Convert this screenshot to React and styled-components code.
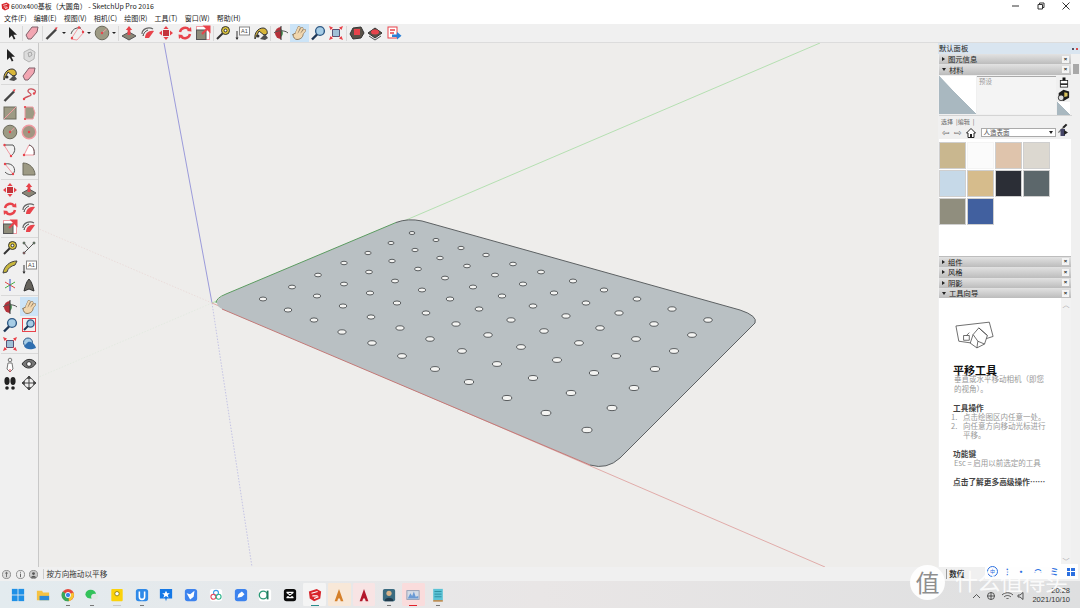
import React from "react";
import styled, { createGlobalStyle } from "styled-components";

const Global = createGlobalStyle`
  html, body { margin: 0; padding: 0; background: #f0f0f0; overflow: hidden; }
  * { box-sizing: border-box; }
  body { font-family: "Noto Sans CJK SC", "Liberation Sans", sans-serif; }
`;

const R = "#e8434b";
const P = "#f19aa2";

const icons = {
  arrow: <path d="M5 2v11l2.8-2.6 2 4.2 1.6-.8-2-4H13z" fill="#222" />,
  eraser: <path d="M2 10l6-8h6l-1 5-6 7H4z" fill="#f2a6b2" stroke="#80606a" />,
  pencil: <g><path d="M2.5 14L12 4.5" stroke="#444" strokeWidth="2.4" /><path d="M10.5 3l3-1-1 3z" fill={R} /></g>,
  line: <g fill="none"><path d="M3 12c1-3 6-2 7-4S6 6 7 3.500s5-2 7 0c1 1 0 3-1 3" stroke="#c9505a" strokeWidth="1.300" /><circle cx="3" cy="12" r="1.200" fill={R} /><circle cx="13" cy="6.500" r="1.200" fill={R} /></g>,
  arc: <g fill="none"><path d="M2 14L10 2l5 5-7 8z" stroke={P} /><path d="M2 9a8 8 0 0 1 10-6" stroke="#555" /><circle cx="3" cy="13" r="1.2" fill={R} /><circle cx="10" cy="2.5" r="1.2" fill={R} /><circle cx="14" cy="7" r="1.2" fill={R} /></g>,
  disc: <g><circle cx="8" cy="8" r="6.8" fill="#9d9a84" stroke="#6c6a5c" /><path d="M8 8l4.5-4" stroke={P} /><circle cx="8" cy="8" r="1.2" fill={R} /></g>,
  polygon: <g><circle cx="8" cy="8" r="6.8" fill="#a29582" stroke={P} strokeWidth="1.4" /><circle cx="8" cy="8" r="1.2" fill={R} /></g>,
  square: <g><rect x="2" y="2" width="12" height="12" fill="#9d9a84" stroke="#6c6a5c" /><path d="M2 14L14 2" stroke={P} /></g>,
  rotRect: <g><path d="M4 2h8l2 6-2 6H4z" fill="#9d9a84" stroke={P} /><circle cx="4" cy="2" r="1.1" fill={R} /><circle cx="4" cy="14" r="1.1" fill={R} /></g>,
  arc2: <g fill="none"><path d="M2 3h9c3 3 2 8-2 11" stroke="#555" /><path d="M2 3l7 11" stroke={P} /><circle cx="2.5" cy="3" r="1.2" fill={R} /><circle cx="9" cy="14" r="1.2" fill={R} /></g>,
  pie: <g><path d="M3 13L8 3c4 1 6 5 5 10z" fill="#fff" stroke={P} /><path d="M8 3c4 1 6 5 5 10" fill="none" stroke="#555" /><circle cx="3" cy="13" r="1.2" fill={R} /></g>,
  curve: <g fill="none"><path d="M3 3c8-2 12 6 8 10-2 1-5 1-8-2" stroke="#555" /><path d="M3 3l8 10" stroke={P} /><circle cx="3" cy="3" r="1.2" fill={R} /><circle cx="11" cy="13" r="1.2" fill={R} /></g>,
  wedge: <path d="M2 2v12h12C14 8 9 2 2 2z" fill="#9d9a84" stroke="#6c6a5c" />,
  pushpull: <g><path d="M1 11l7-4 7 4-7 4z" fill="#8a8676" stroke="#555" /><path d="M8 1l3.2 4H9.4v5H6.6V5H4.8z" fill={R} /></g>,
  followme: <g fill="none"><path d="M2 9a7 6 0 0 1 11-5" stroke="#666" strokeWidth="1.2" /><path d="M5 13c0-5 4-8 9-7l-5 7z" fill={R} /><path d="M3 11c1-4 3-5 5-6" stroke="#333" /></g>,
  move: <g fill={R}><path d="M8 1l2.6 3H5.4zM8 15l-2.6-3h5.2zM1 8l3-2.6v5.2zM15 8l-3 2.6V5.4z" /><rect x="5" y="5" width="6" height="6" fill="#c3343b" /></g>,
  rotate: <g fill="none" stroke={R} strokeWidth="2.4"><path d="M3 7a5.2 5.2 0 0 1 9-2.4" /><path d="M13 9a5.2 5.2 0 0 1-9 2.4" /><path d="M10 6l4.5.5L14 2z" fill={R} stroke="none" /><path d="M6 10l-4.5-.5L2 14z" fill={R} stroke="none" /></g>,
  scale: <g><rect x="1.5" y="1.5" width="13" height="13" fill="#fff" stroke={P} /><rect x="1.5" y="5" width="9.5" height="9.5" fill="#8d8b79" stroke="#555" /><path d="M7 9l6-6M14.5 1.5H10l4.5 4.5z" stroke={R} strokeWidth="2" fill={R} /></g>,
  tape: <g fill="none"><path d="M2 14L9 7" stroke="#333" strokeWidth="2" /><circle cx="10.5" cy="5.5" r="4" fill="#d9c23a" stroke="#333" /><circle cx="10.5" cy="5.5" r="1.4" fill="#fff" stroke="#333" /></g>,
  text: <g fill="none"><rect x="5.5" y="2" width="10" height="8" fill="#fff" stroke="#888" /><path d="M3 6v8" stroke="#333" /><path d="M1.5 12.5L3 15l1.5-2.5z" fill="#333" /><text x="7" y="8.2" fontSize="5.5" fill="#444" fontFamily="Liberation Sans">A1</text></g>,
  paint: <g><path d="M2 14c-1-6 3-11 8-11 3 0 5 3 4 6l-3 1-5-4z" fill="#d9b73a" stroke="#333" /><path d="M7 14l5-5 3 4-3 2z" fill="#4f4f4f" /><circle cx="5" cy="11" r="1.5" fill="#333" /></g>,
  orbit: <g><path d="M2 8a6 6 0 0 1 6-6v12a6 6 0 0 1-6-6z" fill="#b5323a" /><path d="M8 4a5 5 0 0 1 0 8z" fill="#4f9a58" /><path d="M8 1v14" stroke="#333" /><path d="M1 8c3-3 11-3 14 0" fill="none" stroke="#555" /></g>,
  pan: (
    <g strokeLinecap="round" fill="none">
      <path d="M5.500 8L8 2.500M8 8.500L11 3.500M10 9.500L13.500 5.500" stroke="#8f7a5f" strokeWidth="3" />
      <path d="M2 9.500c2-2 8-3 10 0 0 3-3 5-6 5-2 0-4-2-4-5z" fill="#f0d6ae" stroke="#8f7a5f" />
      <path d="M5.500 8L8 2.500M8 8.500L11 3.500M10 9.500L13.500 5.500" stroke="#f0d6ae" strokeWidth="2" />
    </g>
  ),
  zoom: <g fill="none"><circle cx="10" cy="6" r="4.400" fill="#a7cde6" stroke="#2f5a86" strokeWidth="1.400" /><path d="M7 9.500l-5 5" stroke="#1d3554" strokeWidth="2.400" /></g>,
  zoomWin: <g fill="none"><rect x="1.500" y="1.500" width="13" height="13" stroke={R} /><circle cx="9.500" cy="6.500" r="3.600" fill="#a7cde6" stroke="#2f5a86" strokeWidth="1.300" /><path d="M7 9l-4 4" stroke="#1d3554" strokeWidth="2" /></g>,
  extents: <g><rect x="4.500" y="4.500" width="7" height="7" fill="#9fc0d6" stroke="#557" /><path d="M1 1l4 1.500L2.500 5zM15 1l-1.500 4L11 2.500zM1 15l1.500-4L5 13.500zM15 15l-4-1.500 2.500-2.500z" fill={R} /><path d="M2 2l3 3M14 2l-3 3M2 14l3-3M14 14l-3-3" stroke={R} /></g>,
  prev: <g><circle cx="7" cy="6.500" r="4.500" fill="#a7cde6" stroke="#2f5a86" /><path d="M3 10c2 4 7 4 12 2-1-4-5-7-8-6z" fill="#2f6fb0" /></g>,
  gem1: <g><path d="M1 9l3-6 8-1 3 6-3 5-8 1z" fill="#5a5148" stroke="#333" /><rect x="5" y="4" width="6" height="6" fill={R} /></g>,
  gem2: <g><path d="M1 8l7-5 7 5-7 5z" fill="#5a5148" stroke="#333" /><ellipse cx="8" cy="7" rx="4" ry="2.500" fill={R} /><path d="M2 11l6 4 6-4" fill="none" stroke="#555" /></g>,
  share: <g><rect x="2" y="2" width="9" height="11" fill="#fff" stroke={R} /><path d="M4 5h5M4 8h4" stroke={R} strokeWidth="1.500" /><path d="M6 9.500h5V7l4.500 3.800L11 14.500V12H6z" fill="#2c7fd6" /></g>,
  section: <g><path d="M3 5l6-3 5 3-1 7-5 3-5-3z" fill="#dcdcdc" stroke="#b5b5b5" /><path d="M7 6l3-1 1 3-3 2z" fill="none" stroke="#a8a8a8" /></g>,
  axes: <g fill="none"><path d="M8 8V2" stroke="#3a4fc4" /><path d="M8 8l5 3" stroke="#d44" /><path d="M8 8l5-3" stroke="#4a4" /><path d="M8 8l-5 3" stroke="#4a4" /><path d="M8 8l-5-3" stroke="#d44" /><path d="M8 8v6" stroke="#3a4fc4" /></g>,
  dims: <g fill="none" stroke="#555"><path d="M3 13L13 3M3 3l4 5" /><circle cx="3" cy="3" r="1" fill="#6b6" /><circle cx="13" cy="3" r="1" fill="#6b6" /><circle cx="3" cy="13" r="1" fill={R} /></g>,
  protractor: <path d="M1 14C2 7 8 2 15 2l-2 4c-4 1-7 3-8 7z" fill="#c7b63d" stroke="#444" />,
  paintAlt: <path d="M3 14c1-4 2-9 5-12 3 3 4 8 5 12l-5-2z" fill="#66635c" stroke="#333" />,
  walk: <g><circle cx="8" cy="3" r="1.800" fill="none" stroke="#777" /><path d="M6 6h4l1 6-3 3-3-3z" fill="#fff" stroke="#777" /><path d="M8 15v-3" stroke={R} /></g>,
  eye: <g fill="none"><path d="M1 7c4-6 10-6 14-1-3 6-10 7-14 1z" fill="#777" stroke="#333" /><circle cx="8" cy="7" r="2.400" fill="#fff" stroke="#333" /></g>,
  feet: <g fill="#222"><ellipse cx="5" cy="6" rx="2.600" ry="4" /><ellipse cx="5" cy="13" rx="1.800" ry="1.700" /><ellipse cx="11" cy="6" rx="2.600" ry="4" /><ellipse cx="11" cy="13" rx="1.800" ry="1.700" /></g>,
  compass: <g fill="none" stroke="#444"><circle cx="8" cy="8" r="5" /><path d="M8 1v14M1 8h14" /><path d="M8 1L6.500 3h3zM8 15l-1.500-2h3zM1 8l2-1.500v3zM15 8l-2-1.500v3z" fill="#444" /></g>,
  newMat: <g><rect x="3" y="6" width="10" height="9" fill="#fff" stroke="#111" /><rect x="3" y="10" width="10" height="2" fill="#111" /><rect x="6" y="2" width="4" height="4" fill="#111" /></g>,
  camBox: <g><path d="M2 5l6-4 7 2v8l-7 4-6-3z" fill="#1c1c1c" /><path d="M9 4l4 1v4l-4 1z" fill="#d8c25c" /><circle cx="5" cy="11" r="3.500" fill="#ddd" stroke="#222" /></g>,
  dropper: <g><path d="M2 14L9 7" stroke="#777" strokeWidth="2" /><path d="M9 7l5-5" stroke="#222" strokeWidth="3" /></g>,
};

const topTools = [
  ["arrow"], "|", ["eraser"], "|", ["pencil", 1], ["arc", 1], ["disc", 1], "|",
  ["pushpull"], ["followme"], ["move"], ["rotate"], ["scale"], "|",
  ["tape"], ["text"], ["paint"], "|", ["orbit"], ["pan", 0, 1], ["zoom"], ["extents"], "|",
  ["gem1"], ["gem2"], ["share"],
];

const sideGroups = [
  ["arrow", "section", "paint", "eraser"],
  ["pencil", "line", "square", "rotRect", "disc", "polygon", "arc2", "pie", "curve", "wedge"],
  ["move", "pushpull", "rotate", "followme", "scale", "followme"],
  ["tape", "dims", "protractor", "text", "axes", "paintAlt"],
  ["orbit", "pan", "zoom", "zoomWin", "extents", "prev"],
  ["walk", "eye", "feet", "compass"],
];

const rows = [
  [[412, 233], [436, 240], [461, 248], [486, 255], [513, 264], [541, 272], [573, 281], [604, 290], [637, 299], [672, 309], [708, 320]],
  [[391, 243], [415, 250], [440, 258], [467, 266], [495, 275], [523, 284], [554, 293], [586, 303], [619, 313], [654, 324], [692, 335]],
  [[368, 253], [392, 261], [418, 269], [445, 278], [473, 287], [502, 296], [533, 306], [566, 316], [600, 328], [636, 339], [674, 351]],
  [[344, 263], [369, 272], [395, 281], [422, 290], [450, 299], [479, 309], [511, 320], [544, 331], [579, 343], [616, 356], [655, 369]],
  [[318, 275], [344, 284], [370, 293], [397, 303], [426, 313], [456, 324], [488, 335], [521, 347], [557, 360], [594, 373], [634, 388]],
  [[292, 287], [317, 296], [343, 306], [371, 317], [400, 328], [430, 339], [462, 351], [497, 364], [533, 378], [571, 393], [612, 408]],
  [[263, 299], [288, 310], [314, 320], [342, 332], [372, 343], [402, 356], [435, 369], [469, 382], [507, 398], [546, 413], [587, 430]],
];

const swatches = ["#c9b78f", "#fbfbfb", "#dfc4ac", "#dcd8d0", "#c6d9e8", "#d6bc8c", "#2b2e36", "#5c676b", "#908e7e", "#41609f"];
const menus = ["文件(F)", "编辑(E)", "视图(V)", "相机(C)", "绘图(R)", "工具(T)", "窗口(W)", "帮助(H)"];

function Icon({ name, size = 16 }) {
  return <svg width={size} height={size} viewBox="0 0 16 16">{icons[name]}</svg>;
}

function SketchupPath() {
  return (
    <g>
      <path d="M1 4l9-3 5 3-1 8-7 3-5-3z" fill="#d8262c" />
      <path d="M4 6l7-2M5 9h6M7 12l5-2" stroke="#fff" strokeWidth="1.300" />
    </g>
  );
}

const apps = [
  { svg: <g fill="#1e90e6"><rect x="1" y="1" width="6.500" height="6.500" /><rect x="8.500" y="1" width="6.500" height="6.500" /><rect x="1" y="8.500" width="6.500" height="6.500" /><rect x="8.500" y="8.500" width="6.500" height="6.500" /></g> },
  { svg: <g><path d="M1 3h6l1 2h7v9H1z" fill="#f5c242" /><rect x="4" y="9" width="11" height="5" fill="#2d8ad8" /></g> },
  { dot: 1, svg: <g><circle cx="8" cy="8" r="7" fill="#e5493d" /><path d="M8 8L14 5a7 7 0 0 1-5 10z" fill="#f7c631" /><path d="M8 8l1 7A7 7 0 0 1 2 4z" fill="#3aa757" /><circle cx="8" cy="8" r="3" fill="#3b82e6" stroke="#fff" /></g> },
  { dot: 1, svg: <g><ellipse cx="6.500" cy="7" rx="6" ry="5" fill="#33c25a" /><ellipse cx="11" cy="10" rx="4" ry="3.300" fill="#e3e6e5" /></g> },
  { line: 1, svg: <g><rect x="1.500" y="1" width="13" height="14" rx="1" fill="#fbd20b" /><circle cx="8" cy="6.500" r="2.500" fill="#fff" stroke="#8b7a08" /></g> },
  { dot: 1, svg: <g><rect x="1" y="1" width="14" height="14" rx="3" fill="#2f8ae8" /><path d="M5 4v6a3 3 0 0 0 6 0V4" fill="none" stroke="#fff" strokeWidth="1.800" /></g> },
  { svg: <g><path d="M1 1h14v11H9l-1 3-1-3H1z" fill="#1478e6" /><path d="M8 3l1.400 3h3l-2.400 2 1 3-3-1.800L5 11l1-3-2.400-2h3z" fill="#fff" /></g> },
  { svg: <g><rect x="1" y="1" width="14" height="14" rx="3" fill="#3d83ee" /><path d="M3 6l4 1 5-4-1 7-4 3z" fill="#fff" /></g> },
  { svg: <g><rect x="1" y="1" width="14" height="14" rx="3" fill="#fff" /><circle cx="8" cy="5.500" r="2.800" fill="none" stroke="#3a9be8" strokeWidth="1.300" /><circle cx="5" cy="10" r="2.800" fill="none" stroke="#e8475a" strokeWidth="1.300" /><circle cx="11" cy="10" r="2.800" fill="none" stroke="#2fb58c" strokeWidth="1.300" /></g> },
  { svg: <g><rect x="1" y="1" width="14" height="14" rx="3" fill="#3d83ee" /><path d="M4 11l1-4 4-3 3 3-3 3z" fill="#fff" /></g> },
  { svg: <g><rect x="1" y="1" width="14" height="14" rx="3" fill="#fff" /><circle cx="6" cy="8" r="4.500" fill="none" stroke="#2c9a78" strokeWidth="1.500" /><path d="M11 3v10" stroke="#1f7a5e" strokeWidth="2" /></g> },
  { svg: <g><rect x="1" y="1" width="14" height="14" rx="3" fill="#0b0b0b" /><path d="M4 5l8 6M12 5l-8 6M4 5h8M4 11h8" stroke="#fff" strokeWidth="1.400" fill="none" /></g> },
  { bg: "#f4f4f4", bar: "#2a8c8c", svg: <SketchupPath /> },
  { bg: "#f8e8d8", svg: <path d="M8 1l5 14h-3l-1-3H7l-1 3H3z" fill="#d6802a" /> },
  { bg: "#f8e4e4", svg: <path d="M8 1l5 14h-3l-1-3H7l-1 3H3z" fill="#b3182b" /> },
  { dot: 1, svg: <g><rect x="1" y="1" width="14" height="14" rx="2" fill="#3a6b80" /><circle cx="8" cy="6" r="3" fill="#d8b48a" /><path d="M3 15c0-5 10-5 10 0z" fill="#1f3b4d" /></g> },
  { bg: "#fadcdc", bar: "#e0202a", svg: <g><rect x="1" y="3" width="14" height="10" fill="#d4dbe6" stroke="#8e9ab0" /><path d="M2 12l3-6 2 3 2-5 2 6 3-1v3z" fill="#6a9ad4" /></g> },
  { dot: 1, svg: <g><rect x="2.500" y="1" width="11" height="13" fill="#5bc3d6" /><path d="M4 4h8M4 7h8M4 10h8" stroke="#2a8a9c" /><rect x="2.500" y="14" width="11" height="1.500" fill="#b5762a" /></g> },
];

function Tray({ label, open }) {
  return (
    <TrayBar>
      <Caret $open={open} />
      <TrayLabel>{label}</TrayLabel>
      <TrayClose>×</TrayClose>
    </TrayBar>
  );
}

export default function App() {
  return (
    <Screen>
      <Global />
      <TitleBar>
        <svg width="9" height="9" viewBox="0 0 16 16"><SketchupPath /></svg>
        <TitleText>600x400基板（大圆角） - SketchUp Pro 2016</TitleText>
        <WindowButtons>
          <svg width="10" height="10" viewBox="0 0 10 10"><path d="M1 5h7" stroke="#333" /></svg>
          <svg width="10" height="10" viewBox="0 0 10 10" fill="none"><path d="M2 3.500h4.500V8H2zM3.500 3.500V2H8v4.500H6.500" stroke="#333" /></svg>
          <svg width="10" height="10" viewBox="0 0 10 10"><path d="M1.500 1.500l7 7M8.500 1.500l-7 7" stroke="#333" /></svg>
        </WindowButtons>
      </TitleBar>

      <MenuBar>
        {menus.map((m) => <MenuItem key={m}>{m}</MenuItem>)}
      </MenuBar>

      <TopToolbar>
        {topTools.map((t, i) =>
          t === "|" ? (
            <ToolSep key={i} />
          ) : (
            <React.Fragment key={i}>
              <ToolButton $active={t[2]}><Icon name={t[0]} /></ToolButton>
              {t[1] ? <DropArrow /> : null}
            </React.Fragment>
          )
        )}
      </TopToolbar>

      <Workspace>
        <LeftToolbar>
          {sideGroups.map((g, i) => (
            <SideGroup key={i}>
              {g.map((name, j) => (
                <SideButton key={j} $active={name === "pan"}><Icon name={name} /></SideButton>
              ))}
            </SideGroup>
          ))}
        </LeftToolbar>

        <Viewport>
          <svg width="899" height="524" viewBox="39 43 899 524">
            <path d="M212 303L164 43" stroke="#8585d6" strokeWidth="0.8" />
            <path d="M212 303L252 567" stroke="#b9b9e2" strokeWidth="0.8" strokeDasharray="1.500 1.500" />
            <path d="M212 303L820 43" stroke="#a6dca2" strokeWidth="0.8" />
            <path d="M212 303L39 377" stroke="#dce8da" strokeWidth="0.6" strokeDasharray="1.500 1.500" />
            <path d="M212 303L825 567" stroke="#dd9a98" strokeWidth="0.8" />
            <path d="M212 303L39 229" stroke="#e8d2d0" strokeWidth="0.6" strokeDasharray="1.500 1.500" />
            <path
              d="M226 294L396 222.500Q408 218 422 221L740 310Q758 316 755 323L620 458Q607 470 590 465L222 309Q210 302 226 294Z"
              fill="#b9c0c3"
            />
            <path d="M590 465L222 309" stroke="#c27a78" fill="none" />
            <path d="M216 303Q216 298 226 294L396 222.500" stroke="#5b9b60" fill="none" />
            <path d="M396 222.500Q408 218 422 221L740 310Q758 316 755 323L620 458Q607 470 590 465" stroke="#5d6163" fill="none" />
            {rows.map((row, i) =>
              row.map(([x, y], j) => (
                <ellipse
                  key={`${i}-${j}`}
                  cx={x}
                  cy={y}
                  rx={2.900 + (j + i) * 0.135}
                  ry={1.500 + (j + i) * 0.075}
                  fill="#f4f4f2"
                  stroke="#4c4f51"
                  strokeWidth="0.9"
                />
              ))
            )}
          </svg>
        </Viewport>

        <RightPanel>
          <PanelHeader>
            <PanelTitle>默认面板</PanelTitle>
            <PanelDots><i /><b /></PanelDots>
          </PanelHeader>
          <PanelBody>
            <PanelColumn>
              <Tray label="图元信息" />
              <Tray label="材料" open />
              <PreviewRow>
                <MaterialPreview />
                <PresetBox>预设</PresetBox>
                <PreviewTools>
                  <Icon name="newMat" size={12} />
                  <Icon name="camBox" size={13} />
                  <MiniPreview />
                </PreviewTools>
              </PreviewRow>
              <TabRow>
                <TabText>选择</TabText>
                <TabText>|编辑</TabText>
                <TabText>|</TabText>
                <TabPen><Icon name="dropper" size={11} /></TabPen>
              </TabRow>
              <NavRow>
                <NavArrow>⇦</NavArrow>
                <NavArrow>⇨</NavArrow>
                <svg width="10" height="10" viewBox="0 0 10 10"><path d="M5 .5L.5 5H2v4.500h6V5h1.500z" fill="#fff" stroke="#222" /><rect x="4" y="6" width="2" height="3.500" fill="#222" /></svg>
                <SelectBox>人造表面<SelectArrow /></SelectBox>
                <svg width="8" height="9" viewBox="0 0 8 9"><rect x=".5" y="1" width="4.500" height="7" fill="#446" /><path d="M4 2l4 2.500L4 7z" fill="#222" /></svg>
              </NavRow>
              <SwatchArea>
                {swatches.map((c) => <Swatch key={c} $color={c} />)}
              </SwatchArea>
              <Tray label="组件" />
              <Tray label="风格" />
              <Tray label="阴影" />
              <Tray label="工具向导" open />
              <Instructor>
                <HouseArt>
                  <svg width="40" height="29" viewBox="0 0 42 30" fill="#fff" stroke="#444" strokeWidth="0.800">
                    <path d="M1 5L36 1l4 15-22 7-14-2z" />
                    <path d="M19 14l6-7 9 8-3 9-8 4-7-5z" />
                    <path d="M19 14l5 7 7 3M24 21l-1 7M25 7l9 8" fill="none" />
                    <path d="M9 15h6v5H9zM15 12l-3 3" fill="none" />
                  </svg>
                </HouseArt>
                <GuideTitle>平移工具</GuideTitle>
                <GuideText>垂直或水平移动相机（即您<br />的视角）。</GuideText>
                <GuideHead $top={9}>工具操作</GuideHead>
                <GuideStep><span>1.</span><div>点击绘图区内任意一处。</div></GuideStep>
                <GuideStep><span>2.</span><div>向任意方向移动光标进行<br />平移。</div></GuideStep>
                <GuideHead $top={10}>功能键</GuideHead>
                <GuideEsc>Esc = 启用以前选定的工具</GuideEsc>
                <GuideHead $top={9}>点击了解更多高级操作……</GuideHead>
                <GuideScroll>
                  <span>︿</span>
                  <span>﹀</span>
                </GuideScroll>
              </Instructor>
            </PanelColumn>
            <PanelGutter><GutterThumb /></PanelGutter>
          </PanelBody>
        </RightPanel>
      </Workspace>

      <StatusBar>
        <StatusIcon>
          <svg width="9" height="9" viewBox="0 0 10 10"><circle cx="5" cy="5" r="4.500" fill="#ddd" stroke="#888" /><path d="M5 2v6M3.500 3.500h3" stroke="#666" /></svg>
        </StatusIcon>
        <StatusIcon>
          <svg width="9" height="9" viewBox="0 0 10 10"><circle cx="5" cy="5" r="4.500" fill="#eee" stroke="#888" /><path d="M5 4v4M5 2v1" stroke="#555" /></svg>
        </StatusIcon>
        <StatusIcon>
          <svg width="9" height="9" viewBox="0 0 10 10"><circle cx="5" cy="5" r="4.500" fill="#ccc" stroke="#888" /><circle cx="5" cy="4" r="1.600" fill="#555" /><path d="M2 8.500c1-3 5-3 6 0z" fill="#555" /></svg>
        </StatusIcon>
        <StatusText>按方向拖动以平移</StatusText>
        <MeasureLabel>数值</MeasureLabel>
      </StatusBar>

      <Taskbar>
        {apps.map((a, i) => (
          <AppSlot key={i} $bg={a.bg}>
            <svg width="14" height="14" viewBox="0 0 16 16">{a.svg}</svg>
            {a.dot ? <AppDot /> : null}
            {a.bar ? <AppBar $color={a.bar} /> : null}
            {a.line ? <AppBar $color="#c9c9c9" /> : null}
          </AppSlot>
        ))}
        <SysTray>
          <svg width="80" height="10" viewBox="0 0 80 10" fill="none" stroke="#333" strokeWidth="0.800">
            <path d="M1 7l3.500-3.500L8 7" />
            <circle cx="19" cy="5" r="3.500" />
            <path d="M15.500 5h7M19 1.500v7" />
            <path d="M30 4c3-3 8-3 11 0M32 6c2-2 5-2 7 0M34.500 8l1-1 1 1" />
            <path d="M46 4h2l3-2.500v7L48 6h-2z" />
          </svg>
          <Clock>
            <span>20:28</span>
            <span>2021/10/10</span>
          </Clock>
        </SysTray>
      </Taskbar>

      <ImeBar>
        <ImeRound>中</ImeRound>
        <ImeGlyph>⁝</ImeGlyph>
        <ImeGlyph>•</ImeGlyph>
        <ImeGlyph>◠</ImeGlyph>
        <ImeGlyph>ミ</ImeGlyph>
        <ImeGrid><i /><i /><i /><i /></ImeGrid>
      </ImeBar>

      <WatermarkBadge>值</WatermarkBadge>
      <WatermarkText>什么值得买</WatermarkText>
    </Screen>
  );
}

const Screen = styled.div`
  position: relative;
  width: 1080px;
  height: 608px;
  display: flex;
  flex-direction: column;
  overflow: hidden;
  background: #f0f0f0;
  color: #222;
`;

const TitleBar = styled.div`
  height: 12px;
  display: flex;
  align-items: center;
  padding-left: 1px;
  background: #fff;
`;

const TitleText = styled.span`
  margin-left: 1px;
  font-size: 7px;
  line-height: 12px;
  white-space: pre;
  color: #222;
`;

const WindowButtons = styled.div`
  margin-left: auto;
  width: 69px;
  padding-right: 9px;
  display: flex;
  justify-content: space-between;
  align-items: center;
`;

const MenuBar = styled.div`
  height: 12px;
  display: flex;
  align-items: center;
  gap: 7.2px;
  padding-left: 4px;
  background: #fff;
  font-size: 7px;
  color: #222;
`;

const MenuItem = styled.span`
  line-height: 12px;
  white-space: nowrap;
`;

const TopToolbar = styled.div`
  height: 19px;
  display: flex;
  align-items: center;
  padding-left: 3px;
  background: #f0f0f0;
  border-bottom: 1px solid #dcdcdc;
`;

const ToolButton = styled.div`
  width: 18.6px;
  height: 18px;
  flex: none;
  display: flex;
  align-items: center;
  justify-content: center;
  background: ${(p) => (p.$active ? "#cce4f7" : "transparent")};
`;

const ToolSep = styled.div`
  width: 1px;
  height: 15px;
  flex: none;
  margin-right: 0.5px;
  background: #d9d9d9;
`;

const DropArrow = styled.div`
  width: 0;
  height: 0;
  flex: none;
  margin-right: 2.4px;
  border-left: 2px solid transparent;
  border-right: 2px solid transparent;
  border-top: 2px solid #222;
`;

const Workspace = styled.div`
  height: 524px;
  display: flex;
`;

const LeftToolbar = styled.div`
  width: 39px;
  flex: none;
  display: flex;
  flex-direction: column;
  gap: 1px;
  padding: 3px 0 0 1px;
  background: #f0f0f0;
  border-right: 1px solid #c8c8c8;
`;

const SideGroup = styled.div`
  display: grid;
  grid-template-columns: 18.5px 18.5px;
  grid-auto-rows: 18.5px;
  padding-bottom: 0.7px;
  border-bottom: 1px solid #d9d9d9;

  &:last-child {
    border-bottom: none;
  }
`;

const SideButton = styled.div`
  display: flex;
  align-items: center;
  justify-content: center;
  background: ${(p) => (p.$active ? "#cce4f7" : "transparent")};
`;

const Viewport = styled.div`
  width: 899px;
  flex: none;
  background: #eeedeb;
  overflow: hidden;

  svg {
    display: block;
  }
`;

const RightPanel = styled.div`
  width: 142px;
  flex: none;
  display: flex;
  flex-direction: column;
  background: #f0f0f0;
`;

const PanelHeader = styled.div`
  height: 11px;
  display: flex;
  align-items: center;
  justify-content: space-between;
  padding: 0 2px 0 1px;
  background: #d9e5f0;
`;

const PanelTitle = styled.span`
  font-size: 7.3px;
  line-height: 11px;
`;

const PanelDots = styled.div`
  display: flex;
  gap: 2px;

  i, b {
    width: 2px;
    height: 2px;
    background: #556;
  }

  b {
    background: #d84a4a;
  }
`;

const PanelBody = styled.div`
  flex: 1;
  display: flex;
  min-height: 0;
`;

const PanelColumn = styled.div`
  width: 134px;
  flex: none;
  display: flex;
  flex-direction: column;
  padding-left: 1px;
`;

const PanelGutter = styled.div`
  flex: 1;
  padding: 10px 1px 0;
`;

const GutterThumb = styled.div`
  height: 10px;
  background: #a8a8a8;
`;

const TrayBar = styled.div`
  height: 10.4px;
  flex: none;
  display: flex;
  align-items: center;
  padding-left: 3px;
  margin-right: 1px;
  background: linear-gradient(#e2e2e2, #bcbcbc);
`;

const Caret = styled.div`
  width: 0;
  height: 0;
  border-style: solid;
  border-color: transparent;
  ${(p) =>
    p.$open
      ? "border-width: 3px 2px 0; border-top-color: #222;"
      : "border-width: 2px 0 2px 3px; border-left-color: #222;"}
`;

const TrayLabel = styled.span`
  margin-left: 3px;
  font-size: 7.3px;
  line-height: 10px;
`;

const TrayClose = styled.span`
  margin-left: auto;
  width: 7px;
  height: 7px;
  margin-right: 2px;
  background: #f4f4f4;
  font-family: "Liberation Sans", sans-serif;
  font-size: 6px;
  font-weight: 700;
  line-height: 7px;
  text-align: center;
`;

const PreviewRow = styled.div`
  height: 41.5px;
  flex: none;
  display: flex;
  padding-top: 1px;
  border-bottom: 1px solid #d4d4d4;
`;

const MaterialPreview = styled.div`
  width: 37px;
  height: 38px;
  background: linear-gradient(to bottom left, #fff 49.5%, #a9b8c0 50%);
`;

const PresetBox = styled.div`
  width: 79px;
  height: 38px;
  margin-left: 1px;
  padding: 0 2px;
  border-top: 1px solid #aaa;
  background: #f4f4f4;
  font-size: 6.5px;
  line-height: 9px;
  color: #999;
`;

const PreviewTools = styled.div`
  display: flex;
  flex-direction: column;
  align-items: center;
  width: 15px;
  gap: 1px;
`;

const MiniPreview = styled.div`
  width: 13px;
  height: 13px;
  background: linear-gradient(to bottom left, #fff 49.5%, #a9b8c0 50%);
`;

const TabRow = styled.div`
  height: 10px;
  flex: none;
  display: flex;
  align-items: flex-end;
  gap: 3px;
  padding-left: 2px;
`;

const TabText = styled.span`
  font-size: 6px;
  line-height: 8px;
  color: #666;
`;

const TabPen = styled.div`
  margin-left: auto;
  margin-right: 4px;
  height: 11px;
`;

const NavRow = styled.div`
  height: 13px;
  flex: none;
  display: flex;
  align-items: center;
  gap: 4.5px;
  padding-left: 3px;
`;

const NavArrow = styled.span`
  font-family: "DejaVu Sans", sans-serif;
  font-size: 9px;
  line-height: 10px;
  color: #666;
`;

const SelectBox = styled.div`
  width: 75px;
  height: 9px;
  display: flex;
  align-items: center;
  justify-content: space-between;
  padding: 0 2px;
  background: #fff;
  border: 1px solid #aaa;
  font-size: 6.5px;
  line-height: 7px;
  color: #555;
`;

const SelectArrow = styled.i`
  width: 0;
  height: 0;
  border-left: 2px solid transparent;
  border-right: 2px solid transparent;
  border-top: 3px solid #222;
`;

const SwatchArea = styled.div`
  height: 117.5px;
  flex: none;
  display: grid;
  grid-template-columns: repeat(4, 27px);
  grid-auto-rows: 27px;
  gap: 1px;
  align-content: start;
  padding-top: 3px;
  margin-right: 1px;
  background: #fff;
  border-bottom: 1px solid #bdbdbd;
`;

const Swatch = styled.div`
  background: ${(p) => p.$color};
  border: 1px solid ${(p) => (p.$color === "#fbfbfb" ? "#f4f4f4" : "#cfcfcf")};
`;

const Instructor = styled.div`
  position: relative;
  flex: 1;
  min-height: 0;
  padding: 23px 0 0 14px;
  margin-right: 1px;
  background: #fff;
`;

const HouseArt = styled.div`
  height: 29px;
  margin-left: 2px;

  svg {
    display: block;
  }
`;

const GuideTitle = styled.div`
  margin-top: 14px;
  font-size: 11px;
  font-weight: 700;
  line-height: 13px;
  color: #111;
`;

const GuideText = styled.div`
  margin-top: -3px;
  padding-left: 1px;
  font-size: 7.5px;
  line-height: 10px;
  color: #999;
`;

const GuideEsc = styled(GuideText)`
  margin-top: -1px;
`;

const GuideHead = styled.div`
  margin-top: ${(p) => p.$top}px;
  font-size: 7.7px;
  font-weight: 700;
  line-height: 10px;
  color: #444;
`;

const GuideStep = styled.div`
  display: flex;
  margin-left: -2px;
  font-size: 7.5px;
  line-height: 8.7px;
  color: #999;

  span {
    width: 12px;
    flex: none;
  }
`;

const GuideScroll = styled.div`
  position: absolute;
  top: 0;
  right: 0;
  bottom: 0;
  width: 10px;
  display: flex;
  flex-direction: column;
  justify-content: space-between;
  align-items: center;
  padding: 2px 0;
  background: #f2f2f2;
  font-size: 7px;
  line-height: 8px;
  color: #aaa;
`;

const StatusBar = styled.div`
  height: 14px;
  display: flex;
  align-items: center;
  padding-left: 2px;
  background: #f0f0f0;
`;

const StatusIcon = styled.span`
  width: 9px;
  height: 9px;
  margin-right: 4.5px;

  svg {
    display: block;
  }
`;

const StatusText = styled.span`
  padding-left: 3px;
  border-left: 1px solid #ccc;
  font-size: 7.6px;
  line-height: 10px;
  color: #333;
`;

const MeasureLabel = styled.span`
  margin-left: 839px;
  padding-left: 2px;
  border-left: 1px solid #999;
  font-size: 7.5px;
  font-weight: 700;
  line-height: 10px;
  color: #333;
`;

const Taskbar = styled.div`
  height: 27px;
  display: flex;
  align-items: center;
  padding-left: 6px;
  background: linear-gradient(90deg, #e3ebef, #e9e6e6 50%, #dedfe0);
`;

const AppSlot = styled.div`
  position: relative;
  width: 24.7px;
  height: 23px;
  flex: none;
  display: flex;
  align-items: center;
  justify-content: center;
  border-radius: 2px;
  background: ${(p) => p.$bg || "transparent"};
  background-clip: content-box;
  padding: 0 1px;
`;

const AppDot = styled.i`
  position: absolute;
  bottom: 0;
  left: 50%;
  width: 4px;
  height: 1.5px;
  margin-left: -2px;
  background: #777;
`;

const AppBar = styled.i`
  position: absolute;
  bottom: 0;
  left: 50%;
  width: 8px;
  height: 1.5px;
  margin-left: -4px;
  background: ${(p) => p.$color};
`;

const SysTray = styled.div`
  margin-left: auto;
  display: flex;
  align-items: center;
  padding-right: 10px;

  svg {
    margin-right: -20px;
    margin-top: 2px;
  }
`;

const Clock = styled.div`
  display: flex;
  flex-direction: column;
  align-items: flex-end;
  font-family: "Liberation Sans", sans-serif;
  font-size: 7.5px;
  line-height: 9px;
  color: #333;
`;

const ImeBar = styled.div`
  position: absolute;
  left: 985px;
  top: 564px;
  width: 93px;
  height: 15px;
  display: flex;
  align-items: center;
  justify-content: space-between;
  padding: 0 3px 0 0;
  background: rgba(255, 255, 255, 0.92);
  color: #2b6fe0;
`;

const ImeRound = styled.span`
  width: 11px;
  height: 11px;
  margin-left: 2px;
  border: 1.5px solid #2b6fe0;
  border-radius: 50%;
  font-size: 5px;
  line-height: 8px;
  text-align: center;
`;

const ImeGlyph = styled.span`
  font-size: 9px;
  font-weight: 700;
  line-height: 10px;
`;

const ImeGrid = styled.div`
  display: grid;
  grid-template-columns: 3.5px 3.5px;
  gap: 1px;

  i {
    height: 3.5px;
    background: #2b6fe0;
  }
`;

const WatermarkBadge = styled.div`
  position: absolute;
  left: 910px;
  top: 565px;
  width: 35px;
  height: 35px;
  border-radius: 50%;
  background: rgba(255, 255, 255, 0.92);
  font-size: 24px;
  line-height: 34px;
  text-align: center;
  color: #8e8e8e;
`;

const WatermarkText = styled.div`
  position: absolute;
  left: 955px;
  top: 567px;
  font-size: 23px;
  line-height: 27px;
  letter-spacing: -0.5px;
  white-space: nowrap;
  color: rgba(255, 255, 255, 0.85);
`;
